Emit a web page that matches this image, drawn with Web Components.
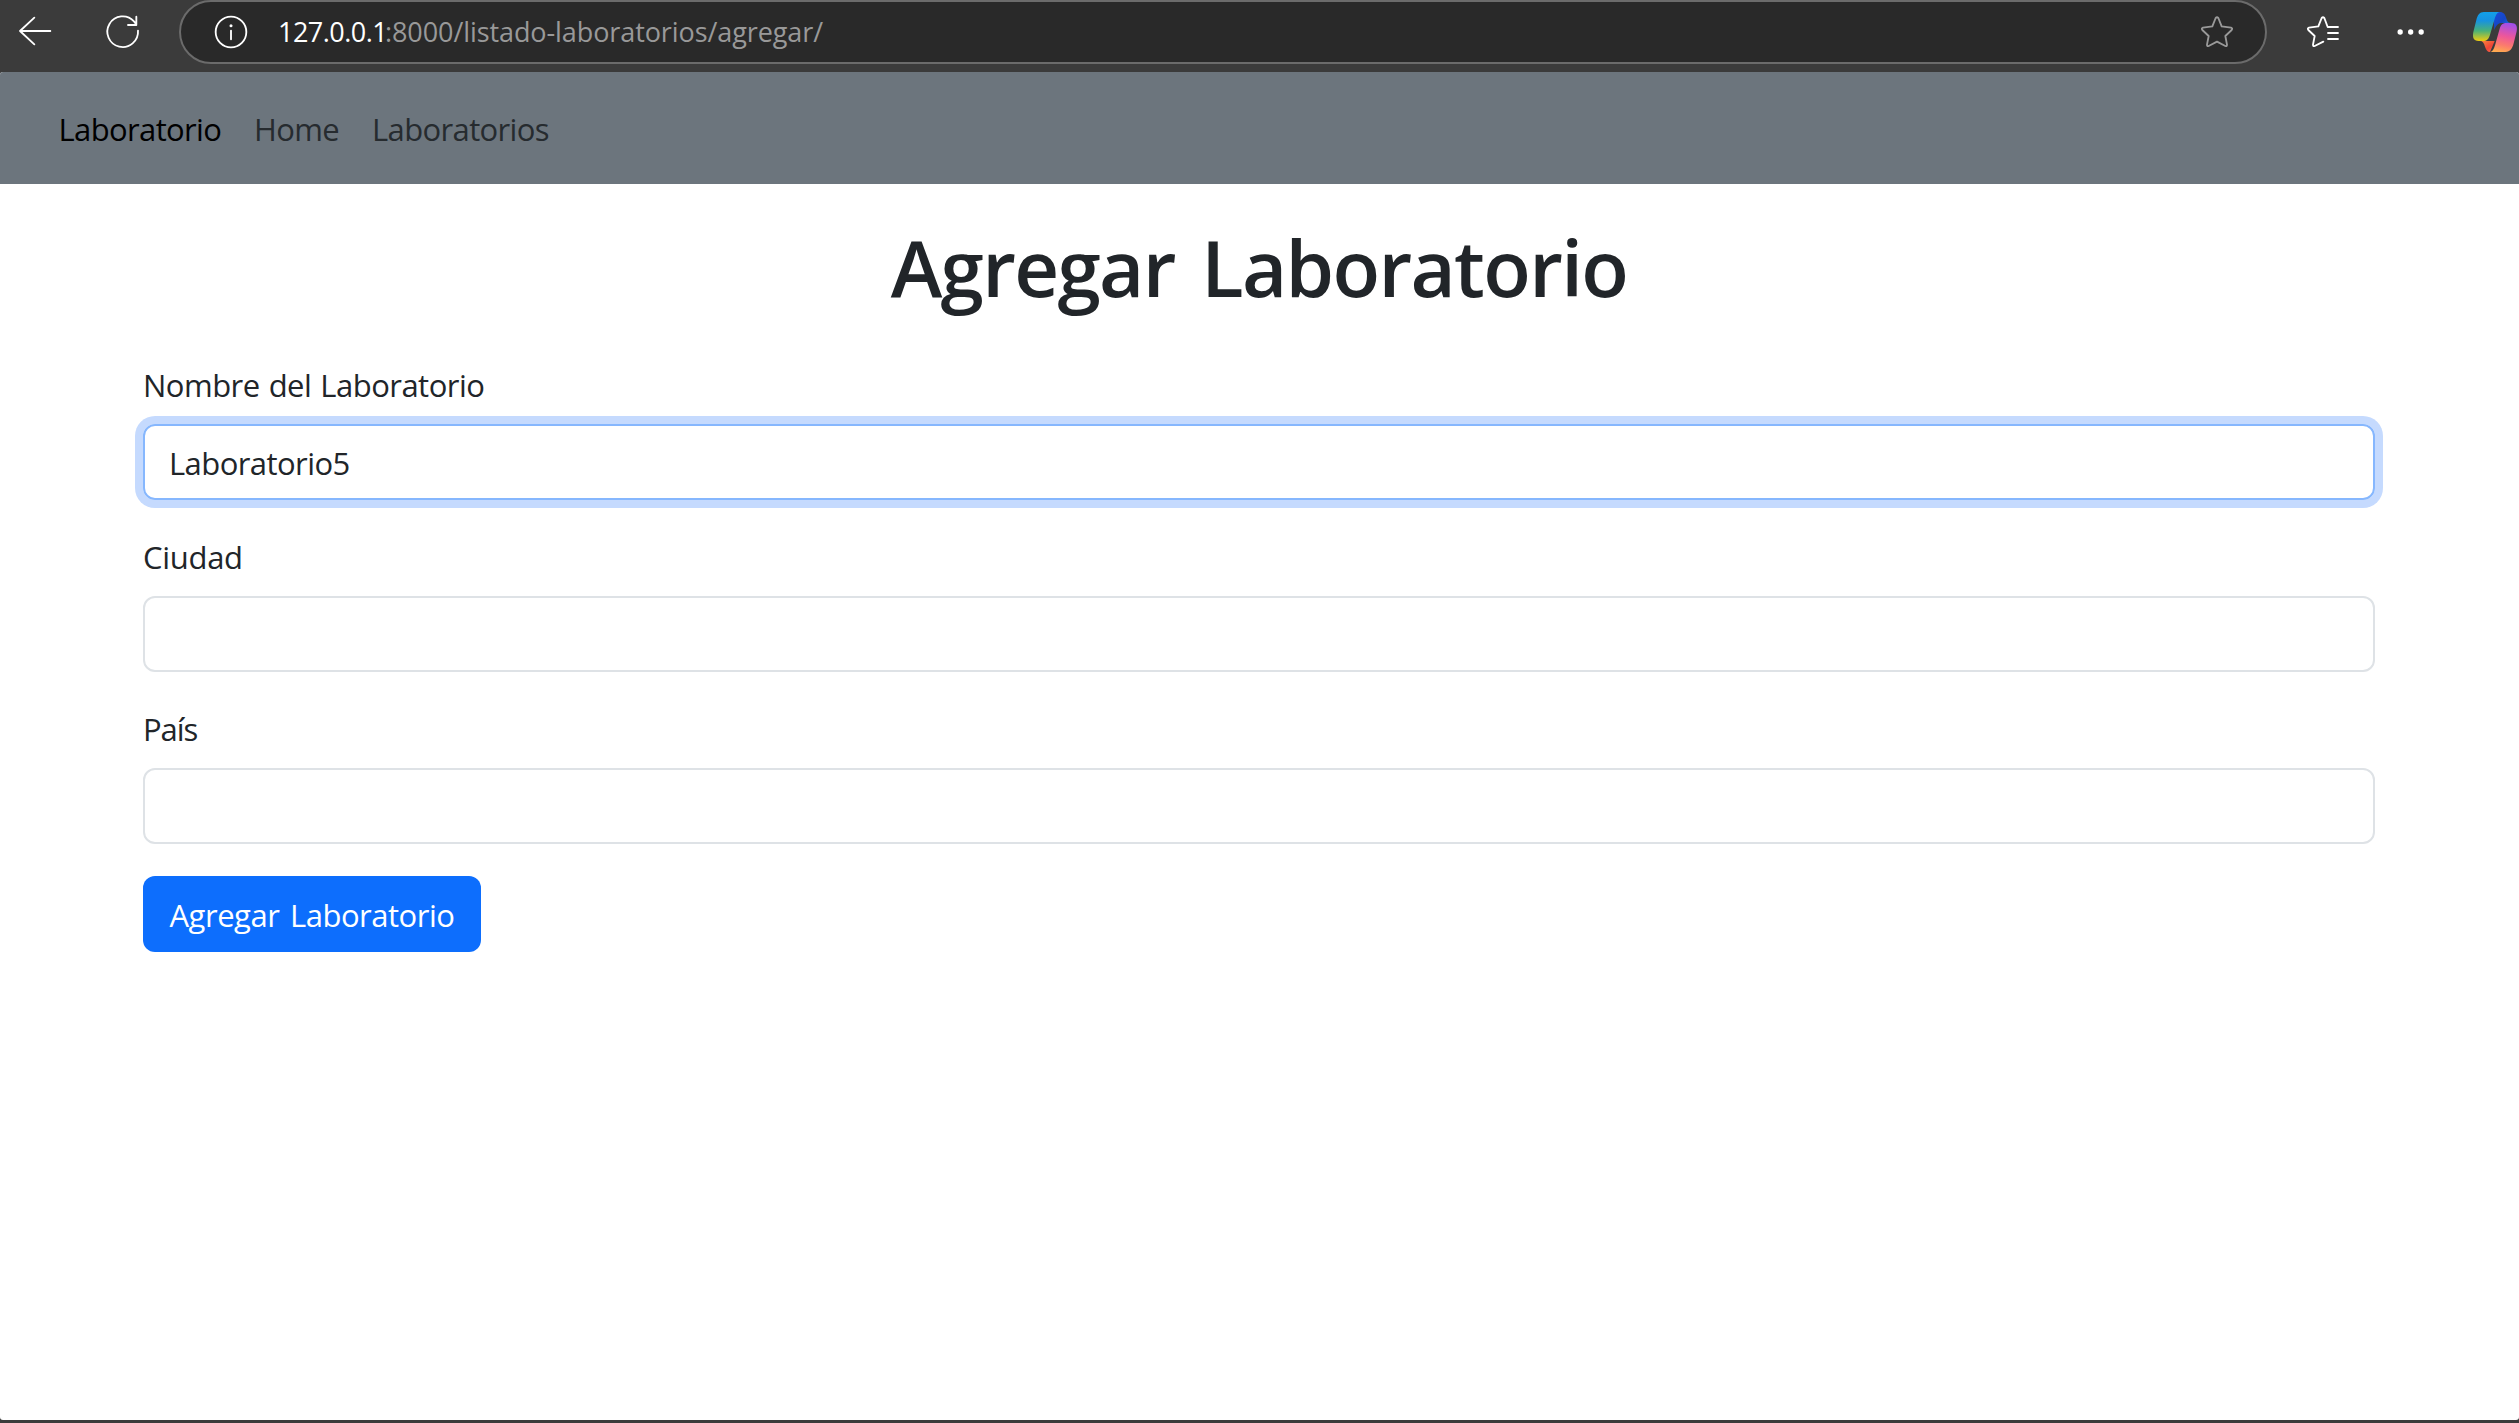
<!DOCTYPE html>
<html lang="es">
<head>
<meta charset="utf-8">
<title>Agregar Laboratorio</title>
<style>
html,body{margin:0;height:100%}
body{background:#3b3b3b;font-family:"Open Sans","Noto Sans",sans-serif;color:#212529;overflow:hidden}
</style>
</head>
<body>
<lab-window></lab-window>

<template id="t-window">
<style>
:host{display:flex;flex-direction:column;height:1423px}
main{flex:1;display:flex;flex-direction:column;background:#fff;border-radius:3px;overflow:hidden;margin-bottom:3px}
form{display:flex;flex-direction:column;align-items:flex-start;padding:0 144px 0 143px}
h1{margin:0 0 45px;padding-top:35px;align-self:stretch;text-align:center;font-size:78px;line-height:96px;font-weight:600;letter-spacing:-1.65px;word-spacing:8px}
lab-field{align-self:stretch;margin-bottom:32px}
</style>
<browser-bar></browser-bar>
<main>
<lab-nav></lab-nav>
<form>
<h1>Agregar Laboratorio</h1>
<lab-field label="Nombre del Laboratorio" focused style="--ls:-.52px;--vs:-.57px">Laboratorio5</lab-field>
<lab-field label="Ciudad" style="--ls:-.3px"></lab-field>
<lab-field label="País" style="--ls:-1.1px"></lab-field>
<lab-button>Agregar Laboratorio</lab-button>
</form>
</main>
</template>

<template id="t-bar">
<style>
:host{display:flex;align-items:flex-start;height:72px;background:#3b3b3b;color:#fff}
svg{display:block;flex:none;fill:none;stroke:#fff;stroke-width:5.5;stroke-linecap:round;stroke-linejoin:round;overflow:visible}
.back{margin:16px 0 0 18px}
.reload{margin:15px 0 0 54px}
.url{box-sizing:border-box;width:2088px;height:64px;margin-left:39px;flex:none;display:flex;align-items:center;border:2px solid #6b6b6b;border-radius:32px;background:#292929;padding:0 31px 0 33px}
.addr{display:flex;flex:1;margin-left:30px;font-size:27px;line-height:60px;white-space:nowrap}
.host{width:107px;letter-spacing:-.52px}
.path{color:#999;letter-spacing:-.09px}
.favs{margin:16px 0 0 39px}
.dots{margin:29px 0 0 57px;fill:#fff;stroke:none}
.copilot{margin:12px 0 0 48px;stroke:none}
</style>
<svg class="back" width="34" height="30" viewBox="54 48 102 90"><path d="M151 93H60M103 53L60 93L103 133"/></svg>
<svg class="reload" width="34" height="34" viewBox="318 45 102 102"><path d="M414 92A46 46 0 1 1 402 64L409 73M409 50V75H384"/></svg>
<div class="url">
<svg width="34" height="34" viewBox="642 45 102 102"><circle cx="693" cy="96" r="46"/><path d="M693 92V118"/><circle cx="693" cy="77" r="4.5" fill="#fff" stroke="none"/></svg>
<div class="addr"><span class="host">127.0.0.1</span><span class="path">:8000/listado-laboratorios/agregar/</span></div>
<svg width="34" height="32" viewBox="60 48 102 96" style="stroke:#999"><path d="M107 54Q111 50 115 54L125 79L153 83Q159 85 155 90L136 108L141 134Q141 140 136 138L111 125L86 138Q81 140 81 134L86 108L67 90Q63 85 69 83L97 79Z"/></svg>
</div>
<svg class="favs" width="34" height="32" viewBox="378 48 102 96"><path d="M474 81H443L433 54Q429 50 425 54L415 79L387 83Q381 85 385 90L404 108L399 134Q399 140 404 138L430 125M444 99H474M444 117H474"/></svg>
<svg class="dots" width="28" height="6" viewBox="652 87 84 18"><circle cx="661.5" cy="96" r="8"/><circle cx="693" cy="96" r="8"/><circle cx="724.5" cy="96" r="8"/></svg>
<svg class="copilot" width="44" height="40" viewBox="879 36 132 120">
<defs>
<linearGradient id="a" x1="0" y1="0" x2="0" y2="1"><stop stop-color="#12a0e9"/><stop offset=".3" stop-color="#1792e0"/><stop offset=".65" stop-color="#49b178"/><stop offset="1" stop-color="#f0cc10"/></linearGradient>
<linearGradient id="b" x1="0" y1="0" x2="1" y2="1"><stop stop-color="#1b4ddb"/><stop offset=".5" stop-color="#1546c6"/><stop offset="1" stop-color="#2683e8"/></linearGradient>
<linearGradient id="c" x1=".6" y1="0" x2=".4" y2="1"><stop stop-color="#a04eea"/><stop offset=".45" stop-color="#ed579a"/><stop offset=".75" stop-color="#fb7a6e"/><stop offset="1" stop-color="#ffa950"/></linearGradient>
<linearGradient id="d" x1="0" y1="0" x2="1" y2="1"><stop stop-color="#f98a3c"/><stop offset=".6" stop-color="#ee4538"/><stop offset="1" stop-color="#f6704d"/></linearGradient>
</defs>
<path fill="url(#b)" d="M940 36H959C971 36 975 43 978 52C981 62 983 69 993 69H966C957 69 948 74 943 90Z"/>
<path fill="url(#d)" d="M900 123H944L930 156C922 156 918 149 915 140C912 129 908 123 900 123Z"/>
<path fill="url(#a)" d="M912 36H960C950 37 947 47 943 60L930 104C926 117 921 123 909 123H896C880 123 877 112 880 96L889 60C893 45 898 36 912 36Z"/>
<path fill="url(#c)" d="M980 69H993C1009 69 1013 79 1010 94L1001 130C997 146 991 156 976 156H930C940 155 943 143 947 129L959 86C963 73 968 69 980 69Z"/>
</svg>
</template>

<template id="t-nav">
<style>
:host{box-sizing:border-box;flex:none;display:flex;height:112px;background:#6c757d;padding:33px 0 0 58.5px;font-size:31px;line-height:48px;white-space:nowrap}
a{color:#262b2f;letter-spacing:-.63px}
.brand{width:195.5px;color:#000}
.home{width:118px}
</style>
<a class="brand">Laboratorio</a><a class="home">Home</a><a>Laboratorios</a>
</template>

<template id="t-field">
<style>
:host{display:flex;flex-direction:column;font-size:31px;line-height:48px}
label{padding-top:1px;margin-bottom:15px;letter-spacing:var(--ls);word-spacing:1.5px}
.box{box-sizing:border-box;height:76px;border:2px solid #dee2e6;border-radius:12px;padding:13px 24px;letter-spacing:var(--vs,0)}
:host([focused]) .box{border-color:#86b7fe;box-shadow:0 0 0 8px #c5dafe}
</style>
<label></label><div class="box" role="textbox"><slot></slot></div>
</template>

<template id="t-button">
<style>
:host{display:block;width:338px;box-sizing:border-box;height:76px;border-radius:12px;background:#0d6efd;color:#fff;padding:15px 0 0 26.5px;font-size:31px;line-height:48px;letter-spacing:-.48px;word-spacing:3px;white-space:nowrap}
</style>
<slot></slot>
</template>

<script>
const define = (name, id, setup) => customElements.define(name, class extends HTMLElement {
  constructor() {
    super();
    this.attachShadow({mode: 'open'}).append(document.getElementById(id).content.cloneNode(true));
  }
  connectedCallback() { if (setup) setup(this); }
});
define('browser-bar', 't-bar');
define('lab-nav', 't-nav');
define('lab-field', 't-field', el => el.shadowRoot.querySelector('label').textContent = el.getAttribute('label'));
define('lab-button', 't-button');
define('lab-window', 't-window');
</script>
</body>
</html>
